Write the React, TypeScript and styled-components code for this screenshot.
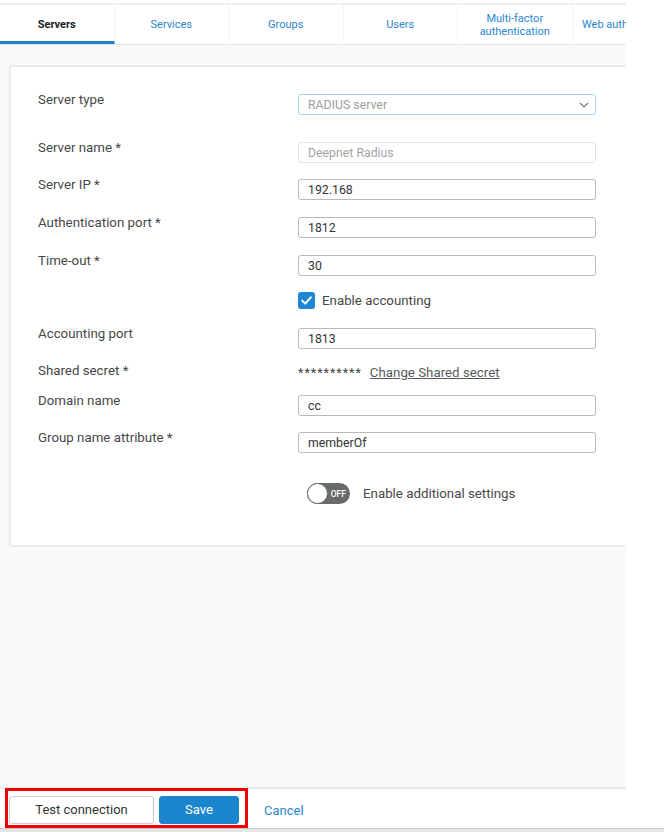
import React from "react";
import styled, { createGlobalStyle } from "styled-components";

const Global = createGlobalStyle`
  html, body { margin: 0; padding: 0; background: #ffffff; }
  body { font-family: Roboto, "Noto Sans", "Liberation Sans", sans-serif; }
  * { box-sizing: border-box; }
`;

const Page = styled.div`
  width: 664px;
  height: 832px;
  display: flex;
  flex-direction: column;
  background: #ffffff;
`;

const Content = styled.div`
  width: 626px;
  height: 828px;
  overflow: hidden;
  display: flex;
  flex-direction: column;
`;

const TopStrip = styled.div`
  height: 5px;
  background: #ffffff;
  border-top: 3px solid #ffffff;
  border-bottom: 2px solid #eeeeee;
`;

const TabBar = styled.div`
  display: flex;
  height: 40px;
  background: #ffffff;
  border-bottom: 1px solid #e4e4e4;
  flex-shrink: 0;
`;

const Tab = styled.div<{ $active?: boolean }>`
  width: 114.5px;
  flex-shrink: 0;
  display: flex;
  align-items: center;
  justify-content: center;
  text-align: center;
  font-size: 11px;
  line-height: 13px;
  white-space: nowrap;
  color: ${(p) => (p.$active ? "#222222" : "#2a87d0")};
  font-weight: ${(p) => (p.$active ? 700 : 400)};
  border-right: 1px solid #f2f2f2;
  border-bottom: 3px solid ${(p) => (p.$active ? "#1f82cb" : "transparent")};
  padding-top: 3px;
`;

const Main = styled.div`
  flex: 1;
  background: #f9f9f9;
  padding: 20px 0 0 9px;
`;

const Card = styled.div`
  width: 640px;
  height: 482px;
  background: #ffffff;
  border: 2px solid #ebebeb;
  border-right: none;
  border-radius: 3px 0 0 3px;
  padding: 27px 0 0 27px;
`;

const Row = styled.div<{ $mt?: number }>`
  display: grid;
  grid-template-columns: 260px 298px;
  align-items: start;
  margin-top: ${(p) => p.$mt ?? 0}px;
`;

const Label = styled.div`
  font-size: 13.3px;
  color: #474747;
  line-height: 16px;
  margin-top: -2px;
`;

const Input = styled.div<{ $muted?: boolean }>`
  height: 21px;
  border: 1px solid ${(p) => (p.$muted ? "#e3e3e3" : "#b9b9b9")};
  border-radius: 3px;
  padding: 0 9px;
  display: flex;
  align-items: center;
  font-size: 12.3px;
  color: ${(p) => (p.$muted ? "#a3a3a3" : "#333333")};
  background: #ffffff;
`;

const Select = styled(Input)`
  border-color: #a9d2f0;
  justify-content: space-between;
  color: #a0a0a0;
  padding-right: 6px;
`;

const CheckWrap = styled.div`
  display: flex;
  align-items: center;
  gap: 7px;
  font-size: 13.3px;
  color: #474747;
`;

const CheckBox = styled.div`
  width: 17px;
  height: 17px;
  border-radius: 3px;
  background: #1e87d3;
  display: flex;
  align-items: center;
  justify-content: center;
`;

const SecretLine = styled.div`
  display: flex;
  align-items: center;
  gap: 8px;
  font-size: 13.3px;
  color: #555555;
  line-height: 16px;
`;

const Stars = styled.span`
  font-size: 12.5px;
  letter-spacing: 1px;
  color: #444;
`;

const LinkText = styled.span`
  text-decoration: underline;
  color: #5a5a5a;
`;

const ToggleRow = styled.div`
  display: flex;
  align-items: center;
  gap: 13px;
  padding-left: 9px;
  font-size: 13.3px;
  color: #474747;
`;

const Toggle = styled.div`
  position: relative;
  width: 43px;
  height: 21px;
  border-radius: 11px;
  background: #6a6a6a;
  display: flex;
  align-items: center;
  justify-content: flex-end;
  padding-right: 4px;
  font-size: 8.5px;
  color: #ffffff;
  font-weight: 500;
`;

const Knob = styled.div`
  position: absolute;
  left: 0;
  top: 0;
  width: 21px;
  height: 21px;
  border-radius: 50%;
  background: #ffffff;
  border: 1.5px solid #6a6a6a;
`;

const Footer = styled.div`
  height: 41px;
  flex-shrink: 0;
  background: #ffffff;
  border-top: 2px solid #e8e8e8;
  display: flex;
  align-items: stretch;
  padding-left: 5px;
  gap: 16px;
`;

const Highlight = styled.div`
  border: 3px solid #ee0000;
  display: flex;
  align-items: center;
  gap: 5px;
  padding: 3px 6px 0 1px;
  margin-top: -1px;
`;

const Button = styled.button<{ $primary?: boolean }>`
  height: 28px;
  border-radius: 3px;
  font-family: inherit;
  font-size: 13px;
  padding: 0;
  width: ${(p) => (p.$primary ? "80px" : "145px")};
  background: ${(p) => (p.$primary ? "#1b86cd" : "#ffffff")};
  color: ${(p) => (p.$primary ? "#ffffff" : "#333333")};
  border: 1px solid ${(p) => (p.$primary ? "#1b86cd" : "#cccccc")};
`;

const Cancel = styled.span`
  display: flex;
  align-items: center;
  padding-top: 3px;
  font-size: 13px;
  color: #2a87d0;
`;

const BottomStrip = styled.div`
  height: 4px;
  background: #e6e6e6;
  border-top: 1px solid #c8c8c8;
`;

const Chevron = () => (
  <svg width="10" height="6" viewBox="0 0 10 6" fill="none">
    <path d="M1 1l4 4 4-4" stroke="#777" strokeWidth="1.2" />
  </svg>
);

const Check = () => (
  <svg width="11" height="9" viewBox="0 0 11 9" fill="none">
    <path d="M1.2 4.6l3 3 5.6-6.2" stroke="#fff" strokeWidth="2" strokeLinecap="round" strokeLinejoin="round" />
  </svg>
);

export default function App() {
  return (
    <Page>
      <Global />
      <Content>
        <TopStrip />
        <TabBar>
          <Tab $active>Servers</Tab>
          <Tab>Services</Tab>
          <Tab>Groups</Tab>
          <Tab>Users</Tab>
          <Tab>
            Multi-factor
            <br />
            authentication
          </Tab>
          <Tab>Web authentication</Tab>
        </TabBar>
        <Main>
          <Card>
            <Row>
              <Label>Server type</Label>
              <Select>
                <span>RADIUS server</span>
                <Chevron />
              </Select>
            </Row>
            <Row $mt={27}>
              <Label>Server name *</Label>
              <Input $muted>Deepnet Radius</Input>
            </Row>
            <Row $mt={16}>
              <Label>Server IP *</Label>
              <Input>192.168</Input>
            </Row>
            <Row $mt={17}>
              <Label>Authentication port *</Label>
              <Input>1812</Input>
            </Row>
            <Row $mt={17}>
              <Label>Time-out *</Label>
              <Input>30</Input>
            </Row>
            <Row $mt={16}>
              <div />
              <CheckWrap>
                <CheckBox>
                  <Check />
                </CheckBox>
                Enable accounting
              </CheckWrap>
            </Row>
            <Row $mt={19}>
              <Label>Accounting port</Label>
              <Input>1813</Input>
            </Row>
            <Row $mt={16}>
              <Label>Shared secret *</Label>
              <SecretLine>
                <Stars>**********</Stars>
                <LinkText>Change Shared secret</LinkText>
              </SecretLine>
            </Row>
            <Row $mt={14}>
              <Label>Domain name</Label>
              <Input>cc</Input>
            </Row>
            <Row $mt={16}>
              <Label>Group name attribute *</Label>
              <Input>memberOf</Input>
            </Row>
            <Row $mt={30}>
              <div />
              <ToggleRow>
                <Toggle>
                  <Knob />
                  OFF
                </Toggle>
                Enable additional settings
              </ToggleRow>
            </Row>
          </Card>
        </Main>
        <Footer>
          <Highlight>
            <Button>Test connection</Button>
            <Button $primary>Save</Button>
          </Highlight>
          <Cancel>Cancel</Cancel>
        </Footer>
      </Content>
      <BottomStrip />
    </Page>
  );
}
